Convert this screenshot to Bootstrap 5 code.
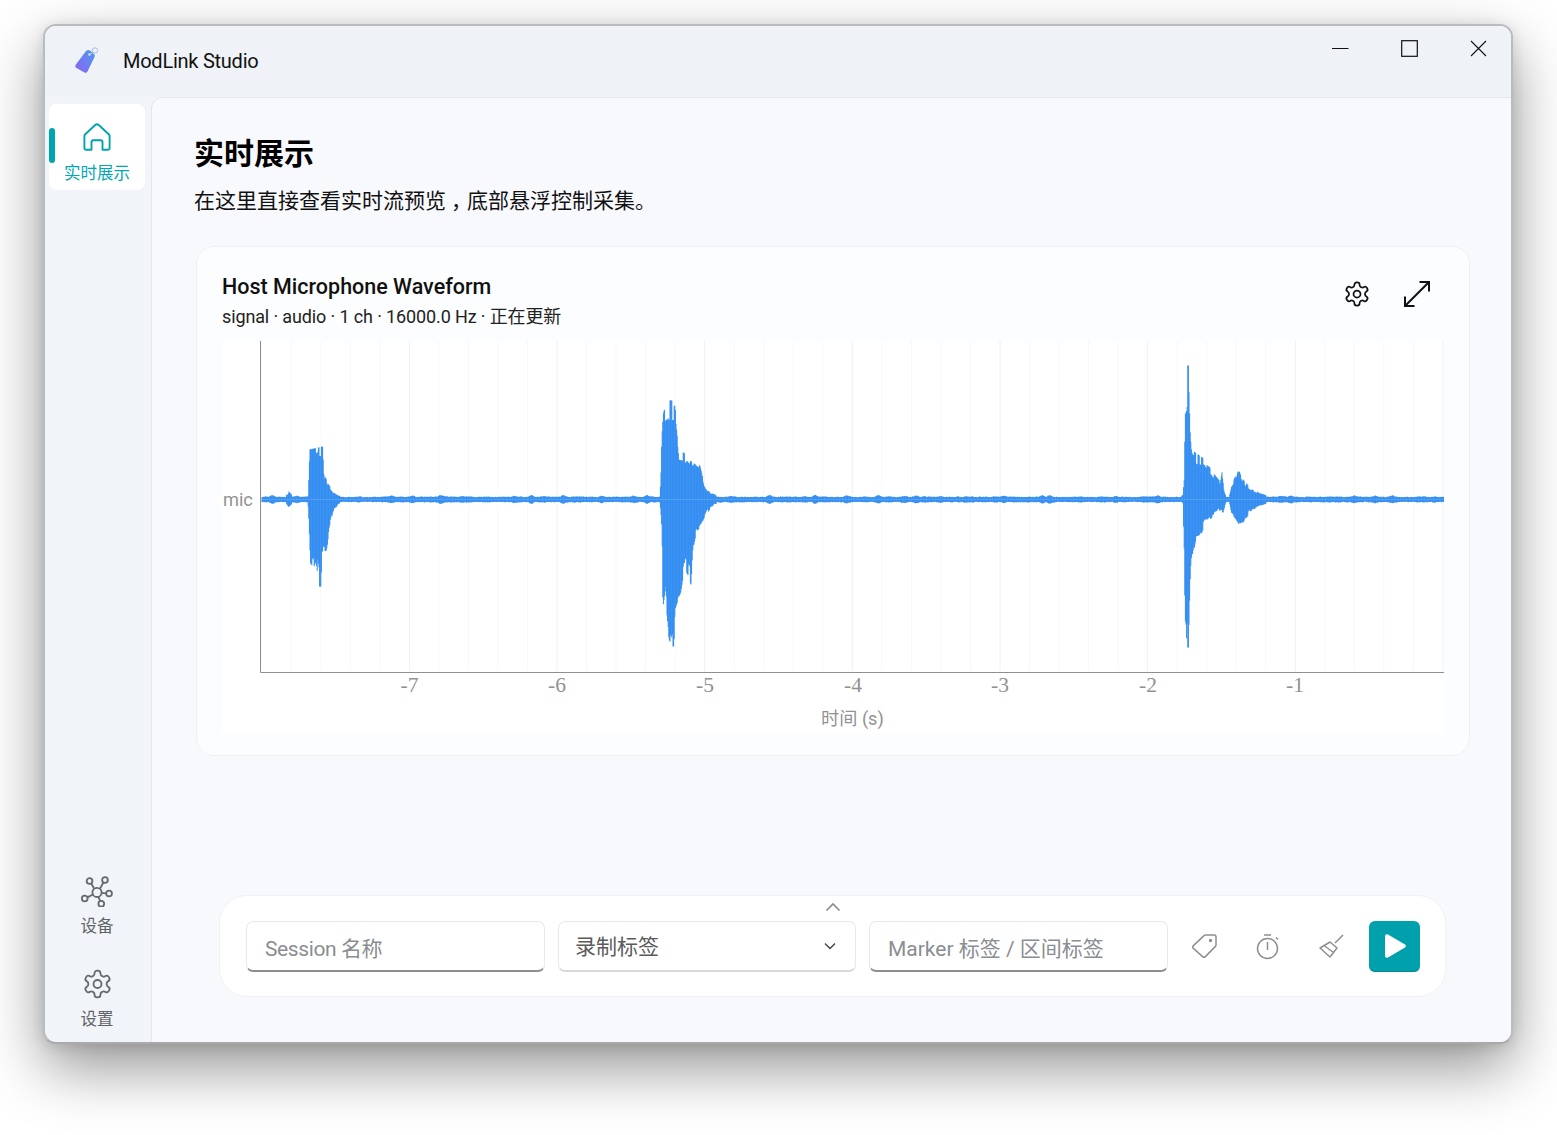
<!DOCTYPE html>
<html lang="zh">
<head>
<meta charset="utf-8">
<title>ModLink Studio</title>
<link href="https://cdn.jsdelivr.net/npm/bootstrap@5.3.0/dist/css/bootstrap.min.css" rel="stylesheet">
<style>
html,body{height:100%;}
body{background:#fff;margin:0;padding:24px 44px 91px 43px;overflow:hidden;font-family:"Roboto","Noto Sans CJK SC",sans-serif;color:#111;}
.app-win{width:100%;height:100%;border:2px solid #b9bbbd;border-bottom-color:#a9aaab;border-radius:13px;overflow:hidden;background:#f1f4f8;box-shadow:0 24px 60px rgba(0,0,0,.42),0 2px 14px rgba(0,0,0,.12);}
.app-titlebar{height:71px;background:#eff2f7;flex:none;}
.app-logo{margin-left:28px;margin-top:20px;}
.app-name{font-size:20px;letter-spacing:-.25px;margin-left:22px;margin-top:20px;line-height:30px;color:#111;}
.win-ctrls{margin:14px 24px 0 0;gap:52px;}
.app-side{width:106px;flex:none;padding:7px 6px 0 4px;}
.side-item{width:96px;height:90px;font-size:16.5px;color:#5f6368;line-height:22px;}
.side-item.is-on{height:86px;border-radius:8px;background:#fff;color:#00a8b3;padding-top:18px;}
.side-item.is-on span.side-txt{margin-top:11px;}
.side-ind{left:0;top:24px;width:6px;height:35px;background:#00a4ae;border-radius:3px;}
.side-foot{gap:3px;}
.side-foot .side-item:last-child{height:82px;}
.side-txt{margin-top:9px;}
.app-main{background:#f8f9fd;border-top:1px solid #e5e7eb;border-left:1px solid #e5e7eb;border-top-left-radius:12px;padding:31px 42px 45px 42px;}
.page-title{font-size:30px;font-weight:700;line-height:50px;margin:0;color:#000;}
.page-sub{font-size:21px;line-height:32px;margin:6px 0 0 0;color:#111;}
.cn-comma{font-feature-settings:"halt";padding:0 5.5px 0 5px;}
.wave-card{height:510px;margin-top:29px;margin-left:2px;background:#fcfdfe;border:1px solid #eff0f3;border-radius:18px;padding:24px 26px 0 25px;width:1274px;}
.wave-title{font-size:21.5px;font-weight:500;line-height:32px;color:#111;}
.wave-meta{font-size:18px;letter-spacing:-.13px;line-height:26px;color:#222;padding-top:1px;}
.wave-tools{gap:32px;margin:9px 12px 0 0;}
.wave-plot{display:block;background:#fff;margin-top:11px;}
.ctl-wrap{margin-top:auto;margin-left:25px;width:1227px;height:102px;background:#fff;border:1px solid #f0f1f4;border-radius:28px;padding:25px 25px 0 26px;gap:13px;}
.ctl-caret{left:605px;top:6px;}
.ctl-field{width:299px;height:51px;flex:none;border:1px solid #e8e9ec;border-bottom:2px solid #8e8e8e;border-radius:7px;background-color:#fff;font-size:21px;letter-spacing:-.4px;color:#555;padding:6px 18px 0;box-shadow:none;}
.ctl-field::placeholder{color:#8a8d91;opacity:1;}
.ctl-mark{letter-spacing:0;}
.ctl-select{border-bottom:2px solid #d9d9d9;padding:3px 40px 0 16px;width:298px;color:#5b5b5b;letter-spacing:0;background-image:url("data:image/svg+xml,%3Csvg xmlns='http://www.w3.org/2000/svg' viewBox='0 0 12 8'%3E%3Cpath d='M1 1.5l5 5 5-5' fill='none' stroke='%23444' stroke-width='1.4'/%3E%3C/svg%3E");background-size:12px 8px;background-position:right 19px center;}
.ctl-icons{gap:37px;margin-left:11px;}
.ctl-play{width:51px;height:51px;background:#00a1ac;border:0;border-bottom:1px solid #068892;border-radius:6px;margin-left:12px;padding:0;flex:none;}
.ctl-play:hover{background:#00a1ac;}
.ax-tick{font-family:"Liberation Serif",serif;font-size:21.5px;fill:#929292;text-anchor:middle;}
.ax-name{font-family:"Roboto","Noto Sans CJK SC",sans-serif;font-size:18.200px;fill:#929292;}
</style>
</head>
<body>
<div class="app-win d-flex flex-column">
  <header class="app-titlebar d-flex align-items-start">
    <svg class="app-logo" width="28" height="30" viewBox="0 0 28 30">
      <defs><linearGradient id="lg" x1="1" y1="0" x2="0" y2="1"><stop offset="0" stop-color="#4f9bef"/><stop offset="1" stop-color="#8b63f3"/></linearGradient></defs>
      <path d="M13 5Q15 3.500 17 4.500L21 8Q22.500 9.500 21.500 11L14.500 25.500Q13.500 27.500 11.500 26.500L3.500 22Q1.500 21 2.500 19Z" fill="url(#lg)"/>
      <circle cx="16.500" cy="8.500" r="1.200" fill="#eef2f8"/>
      <circle cx="22" cy="4.500" r="2.700" fill="none" stroke="#a9bce6" stroke-width="1"/>
      <path d="M16.500 8.500L20.500 6.500" stroke="#a9bce6" stroke-width="1"/>
    </svg>
    <div class="app-name">ModLink Studio</div>
    <div class="win-ctrls d-flex ms-auto">
      <svg width="17" height="17" viewBox="0 0 17 17"><path d="M0 8.500H16.500" stroke="#111" stroke-width="1.100"/></svg>
      <svg width="17" height="17" viewBox="0 0 17 17"><rect x=".7" y=".7" width="15.600" height="15.600" fill="none" stroke="#111" stroke-width="1.200"/></svg>
      <svg width="17" height="17" viewBox="0 0 17 17"><path d="M1 1L16 16M16 1L1 16" stroke="#111" stroke-width="1.100"/></svg>
    </div>
  </header>
  <div class="d-flex flex-grow-1" style="min-height:0">
    <aside class="app-side d-flex flex-column justify-content-between">
      <div class="side-item is-on position-relative d-flex flex-column align-items-center">
        <span class="side-ind position-absolute"></span>
        <svg width="30" height="30" viewBox="0 0 30 30" fill="none" stroke="#00a4ae" stroke-width="1.900" stroke-linejoin="round"><path d="M3 12.500L13.200 3c1-.9 2.600-.9 3.600 0L27 12.500c.4.4.6.900.6 1.400V26c0 1-.8 1.800-1.800 1.800H20.500V20c0-1-.8-1.800-1.800-1.800h-7.400c-1 0-1.800.8-1.800 1.800v7.800H4.200c-1 0-1.800-.8-1.800-1.800V13.900c0-.5.200-1 .6-1.400z"/></svg>
        <span class="side-txt">实时展示</span>
      </div>
      <div class="side-foot d-flex flex-column">
        <div class="side-item d-flex flex-column align-items-center pt-2">
          <svg width="32" height="32" viewBox="0 0 30 30" fill="none" stroke="#66696d" stroke-width="1.700"><circle cx="15" cy="16.300" r="4.300"/><circle cx="8" cy="5.700" r="2.700"/><circle cx="22.500" cy="4.700" r="2.700"/><circle cx="26.300" cy="17.400" r="2.700"/><circle cx="19" cy="27" r="2.700"/><circle cx="3.500" cy="22" r="2.700"/><path d="M9.500 8L12.500 12.800M21 7L17.800 12.800M23.600 17.200L19.300 16.700M18 24.400L16.300 20.500M6 21L11.200 18.300"/></svg>
          <span class="side-txt">设备</span>
        </div>
        <div class="side-item d-flex flex-column align-items-center pt-2">
          <svg width="33" height="32" viewBox="0 0 24 24" fill="none" stroke="#66696d" stroke-width="1.350"><path d="M12.220 2h-.44a2 2 0 0 0-2 2v.18a2 2 0 0 1-1 1.730l-.43.250a2 2 0 0 1-2 0l-.15-.08a2 2 0 0 0-2.730.730l-.22.380a2 2 0 0 0 .730 2.730l.15.100a2 2 0 0 1 1 1.720v.510a2 2 0 0 1-1 1.740l-.15.090a2 2 0 0 0-.730 2.730l.22.380a2 2 0 0 0 2.730.730l.15-.08a2 2 0 0 1 2 0l.43.250a2 2 0 0 1 1 1.730V20a2 2 0 0 0 2 2h.44a2 2 0 0 0 2-2v-.18a2 2 0 0 1 1-1.730l.43-.25a2 2 0 0 1 2 0l.15.080a2 2 0 0 0 2.730-.730l.22-.39a2 2 0 0 0-.730-2.730l-.15-.08a2 2 0 0 1-1-1.740v-.5a2 2 0 0 1 1-1.740l.15-.09a2 2 0 0 0 .730-2.730l-.22-.38a2 2 0 0 0-2.730-.730l-.15.080a2 2 0 0 1-2 0l-.43-.25a2 2 0 0 1-1-1.730V4a2 2 0 0 0-2-2z"/><circle cx="12" cy="12" r="3"/></svg>
          <span class="side-txt">设置</span>
        </div>
      </div>
    </aside>
    <main class="app-main flex-grow-1 d-flex flex-column position-relative">
      <h1 class="page-title">实时展示</h1>
      <p class="page-sub">在这里直接查看实时流预览<span class="cn-comma">，</span>底部悬浮控制采集。</p>
      <section class="wave-card">
        <div class="d-flex justify-content-between align-items-start">
          <div>
            <div class="wave-title">Host Microphone Waveform</div>
            <div class="wave-meta">signal · audio · 1 ch · 16000.0 Hz · 正在更新</div>
          </div>
          <div class="wave-tools d-flex align-items-center">
            <svg width="28" height="28" viewBox="0 0 24 24" fill="none" stroke="#111" stroke-width="1.500"><path d="M12.220 2h-.44a2 2 0 0 0-2 2v.18a2 2 0 0 1-1 1.730l-.43.250a2 2 0 0 1-2 0l-.15-.08a2 2 0 0 0-2.730.730l-.22.380a2 2 0 0 0 .730 2.730l.15.100a2 2 0 0 1 1 1.720v.510a2 2 0 0 1-1 1.740l-.15.090a2 2 0 0 0-.730 2.730l.22.380a2 2 0 0 0 2.730.730l.15-.08a2 2 0 0 1 2 0l.43.250a2 2 0 0 1 1 1.730V20a2 2 0 0 0 2 2h.44a2 2 0 0 0 2-2v-.18a2 2 0 0 1 1-1.730l.43-.25a2 2 0 0 1 2 0l.15.080a2 2 0 0 0 2.730-.730l.22-.39a2 2 0 0 0-.730-2.730l-.15-.08a2 2 0 0 1-1-1.740v-.5a2 2 0 0 1 1-1.740l.15-.09a2 2 0 0 0 .730-2.730l-.22-.38a2 2 0 0 0-2.730-.730l-.15.080a2 2 0 0 1-2 0l-.43-.25a2 2 0 0 1-1-1.730V4a2 2 0 0 0-2-2z"/><circle cx="12" cy="12" r="3"/></svg>
            <svg width="28" height="28" viewBox="0 0 28 28" fill="none" stroke="#111" stroke-width="2"><path d="M2 26L26 2M16.500 2H26V11.500M2 16.500V26H11.500"/></svg>
          </div>
        </div>
        <svg id="plot" class="wave-plot" width="1222" height="392" viewBox="222 341 1222 392">
          <g id="grid"></g>
          <path id="wave" fill="none" stroke="#2e8bf0" stroke-width="1"/>
          <path d="M262 499.500H1443" stroke="#fff" stroke-opacity=".14" stroke-width="1"/>
          <path d="M260.500 341V672.500H1444" fill="none" stroke="#8f8f8f" stroke-width="1"/>
          <text class="ax-name" x="223" y="506">mic</text>
          <text class="ax-tick" x="409.500" y="692">-7</text>
          <text class="ax-tick" x="557" y="692">-6</text>
          <text class="ax-tick" x="705" y="692">-5</text>
          <text class="ax-tick" x="853" y="692">-4</text>
          <text class="ax-tick" x="1000" y="692">-3</text>
          <text class="ax-tick" x="1148" y="692">-2</text>
          <text class="ax-tick" x="1295" y="692">-1</text>
          <text class="ax-name" x="821" y="725">时间 (s)</text>
        </svg>
      </section>
      <div class="ctl-wrap d-flex align-items-start position-relative">
        <svg class="ctl-caret position-absolute" width="16" height="10" viewBox="0 0 16 10"><path d="M1.500 8.500L8 2l6.500 6.500" fill="none" stroke="#8a8a8a" stroke-width="1.600"/></svg>
        <input class="form-control ctl-field" placeholder="Session 名称">
        <select class="form-select ctl-field ctl-select"><option>录制标签</option></select>
        <input class="form-control ctl-field ctl-mark" placeholder="Marker 标签 / 区间标签">
        <div class="ctl-icons d-flex align-items-center">
          <svg width="26" height="51" viewBox="0 0 26 51" fill="none" stroke="#8f8f8f" stroke-width="1.500" stroke-linejoin="round"><path d="M13.500 14H22a2 2 0 0 1 2 2v8a2 2 0 0 1-.6 1.400L13.400 35.600a2 2 0 0 1-2.800 0L1.400 27.400a2 2 0 0 1 0-2.800L12 14.600a2 2 0 0 1 1.500-.6z"/><circle cx="18.500" cy="19.500" r=".9" fill="#8f8f8f"/></svg>
          <svg width="26" height="51" viewBox="0 0 26 51" fill="none" stroke="#8f8f8f" stroke-width="1.500"><circle cx="12.500" cy="27.500" r="10"/><path d="M9 14h7M12.500 21v8M21 16.500l2 2"/></svg>
          <svg width="26" height="51" viewBox="0 0 26 51" fill="none" stroke="#8f8f8f" stroke-width="1.500" stroke-linejoin="round"><path d="M25 14L17 22M2 27L12 21L19 27L12 36ZM6 24.500L15.500 31.500"/></svg>
        </div>
        <button class="btn ctl-play d-flex align-items-center justify-content-center" type="button" aria-label="开始">
          <svg width="24" height="26" viewBox="0 0 24 26"><path d="M2 3.200C2 1.500 3.700.8 5 1.500l17 10c1.200.7 1.200 2.300 0 3l-17 10c-1.300.7-3 0-3-1.700z" fill="#fff"/></svg>
        </button>
      </div>
    </main>
  </div>
</div>
<script>
(function(){
  var g='';
  for(var i=0;i<=40;i++){
    var x=261.7+i*29.53;
    var major=i%5===0&&i>0;
    g+='<path d="M'+x.toFixed(1)+' 341V671" stroke="'+(major?'#f0f0f1':'#f8f8f9')+'" stroke-width="1"/>';
  }
  document.getElementById('grid').innerHTML=g;
  var up=[[262,3],[284,3],[287,5],[289,9],[292,4],[306,3],[308.5,4],[309,30],[310,50],[323,53],[324,25],[329,15],[333,8],[338,4.500],[345,3],
    [659,3],[660,4],[662,65],[663.5,89],[669,99],[675,99],[677,77],[679,50],[693,41],[700,36],[705,12],[710,7],[717,4],[725,3],
    [1180,3],[1183,6],[1184.5,25],[1185,90],[1187,95],[1187.5,134],[1189,134],[1190,90],[1191,60],[1192.5,50],[1198,45],[1205,40],[1212,28],[1220,18],[1222,30],[1224,8],[1227,2],[1229,2],[1232,15],[1236,25],[1238,30],[1239,30],[1243,20],[1250,12],[1260,6],[1270,3.500],[1280,3],[1444,3]];
  var dn=[[262,3],[284,3],[287,5],[289,8],[292,4],[306,3],[308,3],[309,30],[310,65],[313,70],[316,62],[319,87],[321,87],[322,52],[327,52],[329,33],[333,12],[338,5],[345,3],
    [659,3],[660,4],[662,30],[663,115],[665,100],[669,140],[672,147],[674,147],[675,110],[681,92],[684,72],[691,85],[693,50],[696,35],[700,30],[706,15],[713,6],[719,3.500],[728,3],
    [1182,3],[1183,5],[1184.5,60],[1185,120],[1186,125],[1187,148],[1189,148],[1190,100],[1191,70],[1193,55],[1196,40],[1200,38],[1205,25],[1210,20],[1218,12],[1222,10],[1223,15],[1226,3],[1229,2],[1232,15],[1236,20],[1240,28],[1243,25],[1250,12],[1260,6],[1270,3.500],[1280,3],[1444,3]];
  var peakUp=[[318,319.5],[670,671.5],[1187.6,1188.9]];
  var peakDn=[[320,321],[672.5,673.8],[1187.6,1188.9]];
  function inAny(t,x){for(var i=0;i<t.length;i++){if(x>=t[i][0]&&x<=t[i][1])return true;}return false;}
  function ev(t,x){for(var i=1;i<t.length;i++){if(x<=t[i][0]){var a=t[i-1],b=t[i];return a[1]+(b[1]-a[1])*(x-a[0])/(b[0]-a[0]);}}return 3;}
  var s=12345;function r(){s=(s*1103515245+12345)&0x7fffffff;return (s>>8)/(0x7fffffff>>8);}
  var bumps=[];for(var i=0;i<400;i++){bumps.push(r()<.18?.5+r()*1.900:r()*.6);}
  function bump(x){var k=(x-262)/3.5,n=Math.floor(k),f=k-n;return bumps[n]*(1-f)+bumps[n+1]*f;}
  var d='',fa=1,fb=1,c=0;
  for(var x=262;x<=1444;x+=.6){
    var u=ev(up,x),w=ev(dn,x);
    var a,b;
    if(c%3===0){fa=.76+.24*r();fb=.76+.24*r();if(r()<.25){fa=1;}if(r()<.25){fb=1;}}
    c++;
    if(u<=4.500&&w<=4.500){
      var sp=bump(x);
      a=1.900+r()*.700+sp;b=1.900+r()*.700+sp*.9;
    }else{
      a=u*(inAny(peakUp,x)?1:fa);b=w*(inAny(peakDn,x)?1:fb);
    }
    d+='M'+x.toFixed(1)+' '+(499.5-a).toFixed(1)+'V'+(499.5+b).toFixed(1);
  }
  document.getElementById('wave').setAttribute('d',d);
})();
</script>
<script src="https://cdn.jsdelivr.net/npm/bootstrap@5.3.0/dist/js/bootstrap.bundle.min.js"></script>
</body>
</html>
